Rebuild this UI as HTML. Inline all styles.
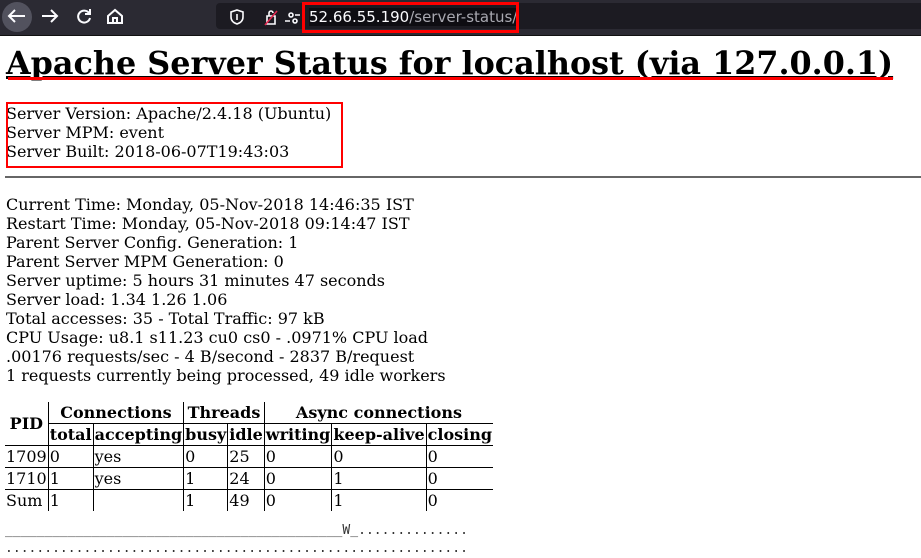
<!DOCTYPE html>
<html><head><meta charset="utf-8"><style>
body{margin:0;width:921px;height:554px;overflow:hidden;background:#fff;font-family:"DejaVu Serif","Liberation Serif",serif;font-size:16px;color:#000;position:relative}
.bar{position:absolute;left:0;top:0;width:921px;height:35px;background:#2b2a33;border-bottom:1px solid #111}
.url{position:absolute;left:216px;top:3px;width:720px;height:26px;background:#1c1b22;border-radius:4px}
.a{position:absolute;white-space:nowrap}
.t{position:absolute;left:6px;top:195px;line-height:19px}
table{position:absolute;left:5px;top:401px;border-collapse:collapse;font-size:16px;line-height:21px}
td,th{padding:0 1px;text-align:left;vertical-align:top}
th{text-align:center}
td,th{border-left:1px solid #000;border-top:1px solid #000}
tr:first-child th{border-top:none}
.nl{border-left:none!important}
</style></head><body>
<div class="bar">
<div style="position:absolute;left:2px;top:2px;width:30px;height:30px;border-radius:50%;background:#52525e"></div>
<svg class="a" style="left:0;top:0" width="140" height="35" fill="none" stroke="#fbfbfe" stroke-width="2">
<path d="M25 16H9M15 10l-6 6 6 6"/><path d="M42 16h15M51 10l6 6-6 6"/>
<path d="M89 13a6 6 0 1 0 1 5M90 9v5h-5"/>
<path d="M108 16l7-6 7 6v7h-14z"/><rect x="113" y="18" width="4" height="5"/>
</svg>
<div class="url"></div>
<svg class="a" style="left:225px;top:6px" width="80" height="22" fill="none" stroke="#fbfbfe" stroke-width="1.6">
<path d="M12 4l6 2v5c0 4-3 6-6 7-3-1-6-3-6-7V6z"/><path d="M12 8v6"/>
<path d="M42 10h8v8h-8z M44 10V7a2 2 0 0 1 4 0"/><path d="M40 19l12-14" stroke="#e22850"/>
<circle cx="66" cy="9" r="2"/><path d="M70 9h5M60 15h5"/><circle cx="70" cy="15" r="2"/>
</svg>
<div class="a" style="left:309px;top:8px;font-family:'DejaVu Sans',sans-serif;font-size:15px;color:#fbfbfe;background:#0e0d12">52.66.55.190<span style="color:#a8a8b0">/server-status/</span></div>
<div class="a" style="left:302px;top:2px;width:211px;height:25px;border:3px solid #f00"></div>
</div>
<div class="a" style="left:6px;top:44px;font-size:31.8px;font-weight:bold;text-decoration:underline;line-height:40px">Apache Server Status for localhost (via 127.0.0.1)</div>
<div class="a" style="left:8px;top:77px;width:885px;height:3px;background:#f00"></div>
<div class="a" style="left:6px;top:104px;line-height:19px">Server Version: Apache/2.4.18 (Ubuntu)<br>Server MPM: event<br>Server Built: 2018-06-07T19:43:03</div>
<div class="a" style="left:6px;top:102px;width:333px;height:62px;border:2px solid #f00"></div>
<div class="a" style="left:5px;top:176px;width:916px;height:2px;background:#666"></div>
<div class="t">Current Time: Monday, 05-Nov-2018 14:46:35 IST<br>Restart Time: Monday, 05-Nov-2018 09:14:47 IST<br>Parent Server Config. Generation: 1<br>Parent Server MPM Generation: 0<br>Server uptime: 5 hours 31 minutes 47 seconds<br>Server load: 1.34 1.26 1.06<br>Total accesses: 35 - Total Traffic: 97 kB<br>CPU Usage: u8.1 s11.23 cu0 cs0 - .0971% CPU load<br>.00176 requests/sec - 4 B/second - 2837 B/request<br>1 requests currently being processed, 49 idle workers</div>
<table style="top:402px">
<tr><th rowspan="2" class="nl" style="vertical-align:middle">PID</th><th colspan="2">Connections</th><th colspan="2">Threads</th><th colspan="3">Async connections</th></tr>
<tr><th>total</th><th>accepting</th><th>busy</th><th>idle</th><th>writing</th><th>keep-alive</th><th>closing</th></tr>
<tr><td class="nl">1709</td><td>0</td><td>yes</td><td>0</td><td>25</td><td>0</td><td>0</td><td>0</td></tr>
<tr><td class="nl">1710</td><td>1</td><td>yes</td><td>1</td><td>24</td><td>0</td><td>1</td><td>0</td></tr>
<tr><td class="nl">Sum</td><td>1</td><td></td><td>1</td><td>49</td><td>0</td><td>1</td><td>0</td></tr>
</table>
<div class="a" style="left:5px;top:522px;font-family:'DejaVu Sans Mono',monospace;font-size:13px;line-height:18px;color:#333;letter-spacing:0.02px">___________________________________________W_..............<br>...........................................................</div>
</body></html>
